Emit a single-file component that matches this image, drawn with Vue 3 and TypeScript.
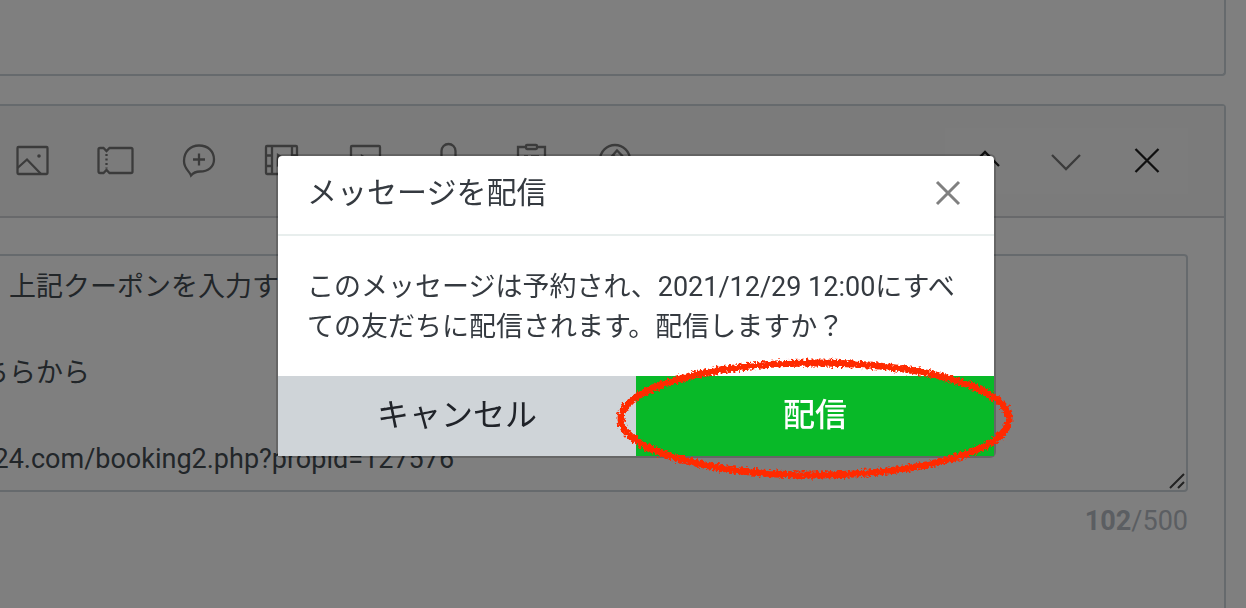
<script setup lang="ts">
import { ref } from 'vue'

const message = ref('\u3000上記クーポンを入力す\n\nちらから\n\n\u2005\u200624.com/booking2.php?propid=127576')
const count = 102
const limit = 500

const tools = [
  { label: '画像', icon: 'image' },
  { label: 'クーポン', icon: 'coupon' },
  { label: 'メッセージ', icon: 'bubble' },
  { label: '動画', icon: 'film' },
  { label: 'リッチビデオ', icon: 'video' },
  { label: '音声', icon: 'mic' },
  { label: 'リサーチ', icon: 'survey' },
  { label: 'カード', icon: 'compass' },
]
</script>

<template>
  <div class="page">
    <section class="panel previous"></section>
    <section class="panel editor">
      <header class="toolbar">
        <nav class="tools">
          <button v-for="tool in tools" :key="tool.icon" type="button" :aria-label="tool.label">
            <svg class="icon" viewBox="0 0 40 40">
              <g v-if="tool.icon === 'image'">
                <rect x="4.500" y="6" width="30" height="27" rx="1" />
                <path d="M4.500 27l9.500-8.500L28 33" />
                <circle class="dot" cx="26" cy="15" r="1.800" />
              </g>
              <g v-else-if="tool.icon === 'coupon'">
                <path d="M4 7H7.500l3 3 3-3H35q1.500 0 1.500 1.500V30.500q0 1.500-1.500 1.500H13.500l-3-3-3 3H4q-1.500 0-1.500-1.500V8.500q0-1.500 1.500-1.500z" />
                <path d="M10.500 13v2m0 2.500v2m0 2.500v2m0 2.500v1" />
              </g>
              <g v-else-if="tool.icon === 'bubble'">
                <path d="M12 34.500C10.500 30 5 28 5 20C5 11 11 4.500 20 4.500S35 10 35 18.500C35 26 29 30.500 21 30.500C17 30.500 14.500 31.500 12 34.500z" />
                <path d="M20 12.500v12M14 18.500h12" />
              </g>
              <g v-else-if="tool.icon === 'film'">
                <rect x="4" y="5" width="31" height="28" rx="1" />
                <path d="M10 5v28M30 5v28M4 14.500h6M4 25h6M30 14.500h5M30 25h5" />
                <path d="M16 14l8 5-8 5z" />
              </g>
              <g v-else-if="tool.icon === 'video'">
                <rect x="5" y="5" width="29" height="28" rx="1" />
                <path d="M16 15l8 5-8 5z" />
              </g>
              <g v-else-if="tool.icon === 'mic'">
                <rect x="12.500" y="3" width="14" height="22" rx="7" />
                <path d="M8 20c0 13 24 13 24 0M20 30v6" />
              </g>
              <g v-else-if="tool.icon === 'survey'">
                <path d="M14 6H6v28h27V6h-8" />
                <rect x="14" y="4" width="11" height="4" rx="1" />
                <path d="M12 15.500h4M19 15.500h8M12 23h4M19 23h8" />
              </g>
              <g v-else>
                <circle cx="20" cy="19" r="15" />
                <path d="M11 22L22 9.500l5 5L16 27l-5 1zM18 14l5 5" />
              </g>
            </svg>
          </button>
        </nav>
        <div class="order">
          <button type="button" aria-label="上へ">
            <svg class="icon strong" viewBox="0 0 40 40"><path d="M6 25l14-14 14 14" /></svg>
          </button>
          <button type="button" aria-label="下へ" disabled>
            <svg class="icon" viewBox="0 0 40 40"><path d="M6 14l14 14 14-14" /></svg>
          </button>
          <button type="button" aria-label="削除">
            <svg class="icon strong" viewBox="0 0 40 40"><path d="M8.500 8l23 23M31.500 8l-23 23" /></svg>
          </button>
        </div>
      </header>
      <div class="content">
        <div class="field">
          <textarea v-model="message" aria-label="メッセージ本文" spellcheck="false"></textarea>
          <svg class="grip" viewBox="0 0 16 16"><path d="M1 15L15 1M9 15l6-6" /></svg>
        </div>
        <p class="counter"><b>{{ count }}</b>/{{ limit }}</p>
      </div>
    </section>

    <div class="backdrop">
      <div class="dialog" role="dialog" aria-modal="true" aria-labelledby="dialog-title">
        <header class="dialog-head">
          <h2 id="dialog-title">メッセージを配信</h2>
          <button type="button" class="close" aria-label="閉じる">
            <svg viewBox="0 0 26 26"><path d="M2 2l22 22M24 2L2 24" /></svg>
          </button>
        </header>
        <p class="dialog-body">このメッセージは予約され、2021/12/29 12:00にすべての友だちに配信されます。配信しますか？</p>
        <footer class="actions">
          <button type="button" class="cancel">キャンセル</button>
          <button type="button" class="send">配信
            <svg class="marker" viewBox="0 0 400 128" aria-hidden="true">
              <defs>
                <filter id="rough" x="-5%" y="-10%" width="110%" height="120%">
                  <feTurbulence type="fractalNoise" baseFrequency="0.400" numOctaves="2" seed="4" />
                  <feDisplacementMap in="SourceGraphic" scale="7" xChannelSelector="R" yChannelSelector="G" />
                </filter>
              </defs>
              <ellipse cx="201" cy="64" rx="194" ry="56" filter="url(#rough)" />
            </svg>
          </button>
        </footer>
      </div>
    </div>
  </div>
</template>

<style>
body {
  margin: 0;
  background: #fff;
}
</style>

<style scoped>
* {
  box-sizing: border-box;
}

.page {
  height: 100vh;
  overflow: hidden;
  display: flex;
  flex-direction: column;
  gap: 28px;
  padding-right: 20px;
  background: #fff;
  color: #444c53;
  font-family: Roboto, "Noto Sans CJK JP", sans-serif;
  font-size: 27px;
}

button {
  border: 0;
  padding: 0;
  background: none;
  color: inherit;
  font: inherit;
}

.panel {
  border: 2px solid #ccd4da;
  border-left: 0;
}

.previous {
  flex: 0 0 76px;
  border-top: 0;
  border-radius: 0 0 4px 0;
}

.editor {
  flex: 1;
  border-bottom: 0;
  border-radius: 0 4px 0 0;
}

.toolbar {
  display: flex;
  align-items: center;
  justify-content: space-between;
  height: 112px;
  padding-right: 36px;
  border-bottom: 2px solid #d0d3d6;
  background: #f7f7f7;
}

.tools {
  display: flex;
  width: 666px;
  margin-left: -9px;
}

.tools button {
  flex: 1;
}

.icon {
  display: block;
  width: 40px;
  height: 40px;
  margin: auto;
  fill: none;
  stroke: #777;
  stroke-width: 2.3;
}

.icon .dot {
  fill: #777;
  stroke: none;
}

.icon.strong {
  stroke: #202020;
}

.order {
  display: flex;
  height: 66px;
  background: #f9f9f9;
}

.order button {
  width: 81px;
  padding-right: 2px;
}

.content {
  padding: 36px 36px 0 0;
}

.field {
  position: relative;
  height: 238px;
  margin-left: -40px;
}

textarea {
  display: block;
  width: 100%;
  height: 100%;
  padding: 10px 20px 0;
  border: 2px solid #ccd4da;
  border-radius: 4px;
  background: transparent;
  color: inherit;
  font: inherit;
  line-height: 43px;
  resize: none;
  overflow: hidden;
}

.grip {
  position: absolute;
  right: 3px;
  bottom: 3px;
  width: 16px;
  height: 16px;
  fill: none;
  stroke: #444;
  stroke-width: 2;
}

.counter {
  margin: 9px 0 0;
  color: #b7bcc4;
  line-height: 40px;
  text-align: right;
}

.backdrop {
  position: fixed;
  inset: 0;
  display: flex;
  align-items: flex-start;
  justify-content: center;
  padding: 154px 0 0 26px;
  background: rgba(0, 0, 0, 0.5);
}

.dialog {
  width: 720px;
  border: 2px solid rgba(0, 0, 0, 0.2);
  border-radius: 6px;
  background: #fff;
  background-clip: padding-box;
  color: #353a40;
}

.dialog-head {
  display: flex;
  align-items: center;
  justify-content: space-between;
  height: 80px;
  padding: 0 33px 4px 29px;
  border-bottom: 2px solid #e8eeed;
}

h2 {
  margin: 0;
  font-size: 30px;
  font-weight: 400;
  line-height: 40px;
}

.close svg {
  display: block;
  width: 26px;
  height: 26px;
  fill: none;
  stroke: #808080;
  stroke-width: 3;
}

.dialog-body {
  margin: 0;
  padding: 31px 29px 29px;
  line-height: 40px;
}

.actions {
  display: flex;
}

.actions button {
  flex: 1;
  height: 80px;
  padding-bottom: 8px;
  font-size: 32px;
}

.cancel {
  background: #cfd4d8;
  color: #202329;
}

.send {
  position: relative;
  background: #08b928;
  color: #fff;
  font-weight: 500;
}

.marker {
  position: absolute;
  top: -21px;
  left: -22px;
  width: 400px;
  height: 128px;
  fill: none;
  stroke: #ff2a06;
  stroke-width: 7;
  pointer-events: none;
}
</style>
